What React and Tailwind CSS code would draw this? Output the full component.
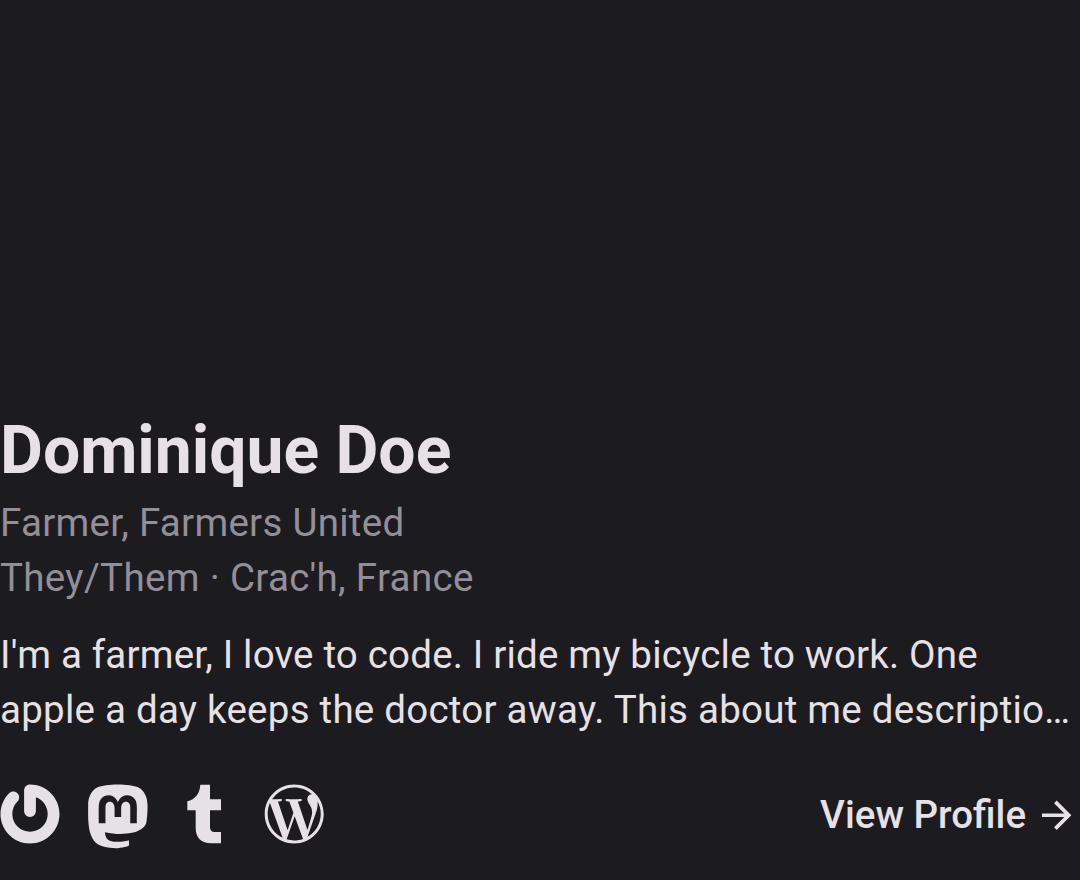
import React from "react";
import { SiGravatar } from "react-icons/si";
import { FaMastodon, FaWordpressSimple } from "react-icons/fa";

function TumblrIcon() {
  return (
    <svg width="34" height="60" viewBox="0 0 102 180" fill="currentColor">
      <path d="M40 2H69V46H102V79H69V129Q69 144 83 144H102V178H73C42 178 26 160 26 132V79H1V52C25 45 38 30 40 2Z" />
    </svg>
  );
}

export default function App() {
  return (
    <main className="flex h-[880px] w-[1080px] flex-col overflow-hidden bg-[#1c1b1f] font-['Roboto',sans-serif] text-[#e6e1e5]">
      <h1 className="mt-[413px] h-[82px] shrink-0 whitespace-nowrap text-[66px] font-bold leading-[76px]">Dominique Doe</h1>
      <div className="h-[132px] shrink-0 whitespace-nowrap text-[38.5px] leading-[55px] text-[#938f99]">
        <p className="tracking-[0.28px]">Farmer, Farmers United</p>
        <p className="tracking-[0.33px]">They/Them · Crac'h, France</p>
      </div>
      <div className="h-[157px] shrink-0 whitespace-nowrap text-[38.5px] leading-[55px]">
        <p className="tracking-[0.19px]">I'm a farmer, I love to code. I ride my bicycle to work. One</p>
        <p className="tracking-[0.245px]">apple a day keeps the doctor away. This about me descriptio…</p>
      </div>
      <footer className="flex h-[64px] items-start justify-between pr-2">
        <div className="flex items-start">
          <SiGravatar viewBox="-0.2 -0.2 24.4 24.4" className="h-[60px] w-[60px]" />
          <FaMastodon className="-mt-[4.25px] ml-[26.2px] h-[72.8px] w-[63.7px]" />
          <div className="ml-[37.1px]">
            <TumblrIcon />
          </div>
          <FaWordpressSimple viewBox="2.1 4.6 504.4 504.4" className="ml-[43px] h-[60px] w-[60px]" />
        </div>
        <a className="flex h-[62px] items-center gap-4 whitespace-nowrap text-[38.5px] font-medium">
          View Profile
          <svg width="30" height="30" viewBox="4 3.7 16.36 16.36" fill="currentColor">
            <path d="M12 4l-1.41 1.41L16.17 11H4v2h12.17l-5.58 5.59L12 20l8-8z" />
          </svg>
        </a>
      </footer>
    </main>
  );
}
